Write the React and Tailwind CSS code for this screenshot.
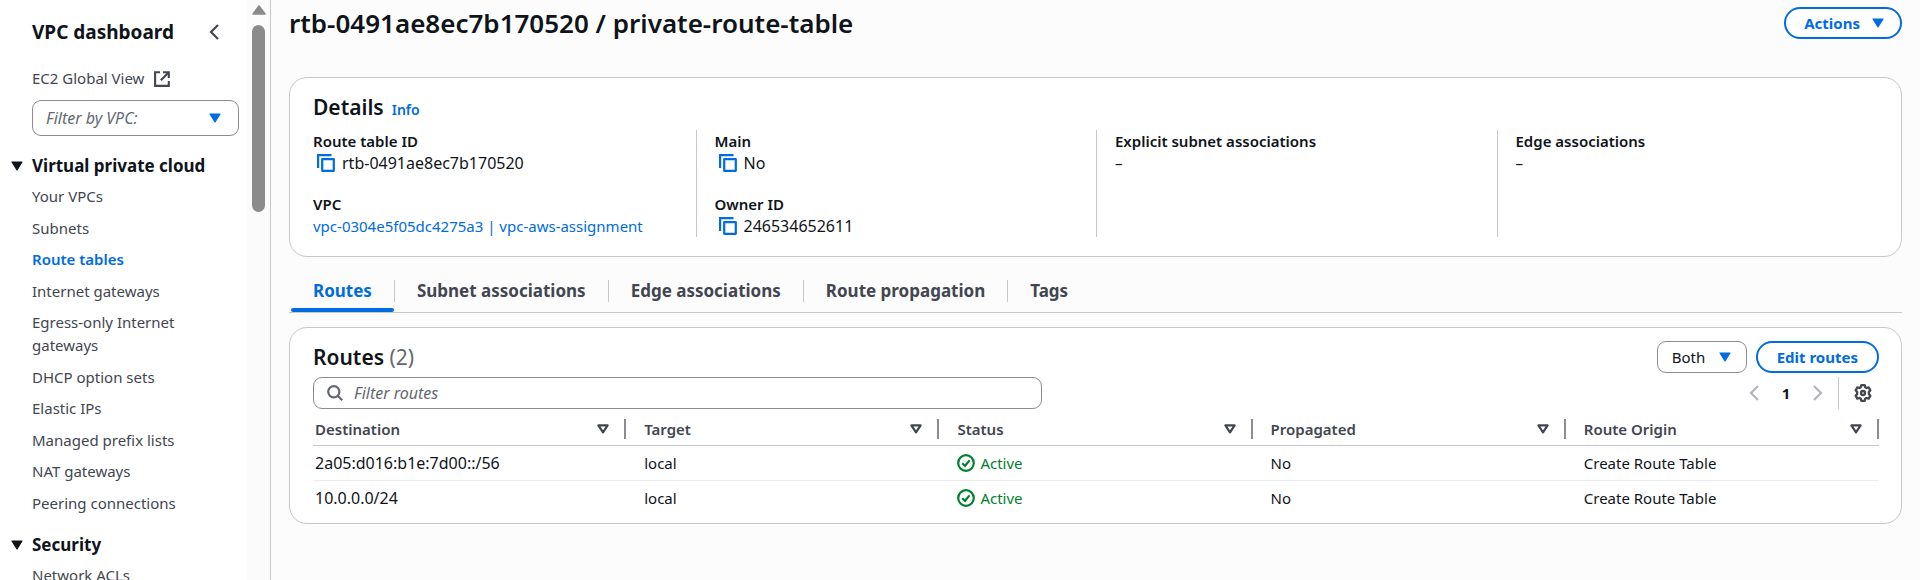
import React from "react";

const NAV = [
  "Your VPCs",
  "Subnets",
  "Route tables",
  "Internet gateways",
  "Egress-only Internet gateways",
  "DHCP option sets",
  "Elastic IPs",
  "Managed prefix lists",
  "NAT gateways",
  "Peering connections",
];

const TABS = ["Routes", "Subnet associations", "Edge associations", "Route propagation", "Tags"];

const COLUMNS = ["Destination", "Target", "Status", "Propagated", "Route Origin"];

const ROUTES = [
  { destination: "2a05:d016:b1e:7d00::/56", target: "local", status: "Active", propagated: "No", origin: "Create Route Table" },
  { destination: "10.0.0.0/24", target: "local", status: "Active", propagated: "No", origin: "Create Route Table" },
];

function Caret({ className }) {
  return (
    <svg viewBox="0 0 12 10" className={className} aria-hidden="true">
      <path d="M1 1h10L6 9z" fill="currentColor" stroke="currentColor" strokeWidth="1.2" strokeLinejoin="round" />
    </svg>
  );
}

function SortIcon() {
  return (
    <svg viewBox="0 0 12 10" className="h-[10px] w-3" fill="none" stroke="currentColor" strokeWidth="2.2" strokeLinejoin="round" aria-hidden="true">
      <path d="M1.4 1.4h9.2L6 8.4z" />
    </svg>
  );
}

function Chevron({ direction, className }) {
  return (
    <svg viewBox="0 0 10 16" className={className} fill="none" stroke="currentColor" strokeWidth="2.2" aria-hidden="true">
      <path d={direction === "left" ? "M9 1 2 8l7 7" : "M1 1l7 7-7 7"} />
    </svg>
  );
}

function ExternalIcon() {
  return (
    <svg viewBox="0 0 16 16" className="size-4" fill="none" stroke="currentColor" strokeWidth="2.1" aria-hidden="true">
      <path d="M6 1.2H1.1v13.7h13.7V10" />
      <path d="M9 1.2h5.8V7" />
      <path d="M14.6 1.4 6.8 9.2" />
    </svg>
  );
}

function CopyIcon() {
  return (
    <svg viewBox="0 0 18 18" className="size-[18px]" fill="none" stroke="currentColor" strokeWidth="2.2" aria-hidden="true">
      <path d="M1.1 14V1.1H14.5" />
      <path d="M5.2 5.2h11.6v11.6H5.2z" strokeLinejoin="round" />
    </svg>
  );
}

function CheckCircle() {
  return (
    <svg viewBox="0 0 18 18" className="size-[18px]" fill="none" stroke="currentColor" strokeWidth="2.2" aria-hidden="true">
      <circle cx="9" cy="9" r="7.8" />
      <path d="M5.2 9.2 8 11.8l4.6-5.4" />
    </svg>
  );
}

function SearchIcon() {
  return (
    <svg viewBox="0 0 16 16" className="size-4" fill="none" stroke="currentColor" strokeWidth="2.2" aria-hidden="true">
      <circle cx="6.8" cy="6.8" r="5.6" />
      <path d="m10.8 10.8 4.4 4.4" />
    </svg>
  );
}

function GearIcon() {
  return (
    <svg viewBox="0 0 18 18" className="size-[18px]" fill="none" stroke="currentColor" strokeWidth="2.3" strokeLinejoin="round" aria-hidden="true">
      <path d="M7.3 1.2h3.4l.5 2 1.3.8 2.2-.6 1.7 2.9-1.5 1.6v2.2l1.5 1.6-1.7 2.9-2.2-.6-1.3.8-.5 2H7.3l-.5-2-1.3-.8-2.2.6-1.7-2.9 1.5-1.6V7.9L1.6 6.3l1.7-2.9 2.2.6 1.3-.8z" />
      <circle cx="9" cy="9" r="2" />
    </svg>
  );
}

function Detail({ label, copy, children }) {
  return (
    <div>
      <dt className="font-semibold">{label}</dt>
      <dd className={copy ? "flex items-center text-[16px]" : "flex items-center"}>
        {copy && (
          <button type="button" aria-label={"Copy " + label} className="mr-[7px] ml-1 text-[#006ce0]">
            <CopyIcon />
          </button>
        )}
        {children}
      </dd>
    </div>
  );
}

function SectionHeading({ children }) {
  return (
    <h2 className="flex items-center gap-[9px] pl-[11px] text-[17px] leading-[23px] font-bold">
      <Caret className="h-[10px] w-3" />
      {children}
    </h2>
  );
}

function Sidebar() {
  return (
    <aside className="flex w-[271px] shrink-0 overflow-hidden border-r border-[#c6c6cd] bg-white">
      <nav className="min-w-0 flex-1" aria-label="VPC">
        <div className="flex items-center justify-between pt-[18px] pr-7 pl-8">
          <a href="#dashboard" className="text-[19px] leading-7 font-bold">VPC dashboard</a>
          <button type="button" aria-label="Close navigation" className="text-[#424650]">
            <Chevron direction="left" className="h-4 w-[10px]" />
          </button>
        </div>
        <a href="#global-view" className="mt-[21px] ml-8 flex items-center gap-[10px] leading-[23px] text-[#424650]">
          EC2 Global View
          <ExternalIcon />
        </a>
        <div className="mt-[10px] mr-2 ml-8 grid items-center">
          <select aria-label="Filter by VPC" className="col-start-1 row-start-1 h-9 w-full appearance-none rounded-[9px] border border-[#8c8c94] bg-white px-[13px] text-[16px] text-[#656871] italic">
            <option>Filter by VPC:</option>
          </select>
          <Caret className="pointer-events-none col-start-1 row-start-1 mr-[18px] h-[10px] w-3 justify-self-end text-[#006ce0]" />
        </div>
        <div className="mt-[18px]">
          <SectionHeading>Virtual private cloud</SectionHeading>
        </div>
        <ul className="mt-2 flex min-h-[330px] flex-col justify-between pr-14 pl-8 leading-[23px] text-[#424650]">
          {NAV.map((item) => (
            <li key={item}>
              <a href="#nav" className={item === "Route tables" ? "block font-semibold text-[#006ce0]" : "block"}>{item}</a>
            </li>
          ))}
        </ul>
        <div className="mt-[18px]">
          <SectionHeading>Security</SectionHeading>
        </div>
        <a href="#nav" className="mt-2 block pl-8 leading-[23px] text-[#424650]">Network ACLs</a>
      </nav>
      <div className="flex w-[23px] flex-col items-center bg-[#fbfbfb] pt-[5px]" aria-hidden="true">
        <svg viewBox="0 0 14 10" className="h-[10px] w-[14px] text-[#8b8b8b]">
          <path d="M7 1 13 9H1z" fill="currentColor" stroke="currentColor" strokeWidth="1.6" strokeLinejoin="round" />
        </svg>
        <div className="mt-[10px] h-[187px] w-[13px] rounded-full bg-[#8b8b8b]" />
      </div>
    </aside>
  );
}

function Details() {
  return (
    <section className="mt-[38px] rounded-[18px] border border-[#c6c6cd] bg-white pt-[15px] pr-[22px] pb-[19px] pl-[23px]">
      <div className="flex items-baseline gap-2">
        <h2 className="text-[21px] leading-7 font-semibold">Details</h2>
        <a href="#info" className="text-[14px] leading-5 font-semibold text-[#006ce0]">Info</a>
      </div>
      <dl className="mt-[9px] grid grid-cols-4 gap-x-9 leading-[22px]">
        <div className="flex flex-col gap-[19px]">
          <Detail label="Route table ID" copy>rtb-0491ae8ec7b170520</Detail>
          <Detail label="VPC">
            <a href="#vpc" className="text-[#006ce0]">vpc-0304e5f05dc4275a3 | vpc-aws-assignment</a>
          </Detail>
        </div>
        <div className="-ml-[18px] flex flex-col gap-[19px] border-l border-[#c6c6cd] pl-[18px]">
          <Detail label="Main" copy>No</Detail>
          <Detail label="Owner ID" copy>246534652611</Detail>
        </div>
        <div className="-ml-[18px] border-l border-[#c6c6cd] pl-[18px]">
          <Detail label="Explicit subnet associations">–</Detail>
        </div>
        <div className="-ml-[18px] border-l border-[#c6c6cd] pl-[18px]">
          <Detail label="Edge associations">–</Detail>
        </div>
      </dl>
    </section>
  );
}

function Tabs() {
  return (
    <div role="tablist" className="mt-[18px] flex border-b border-[#c6c6cd]">
      {TABS.map((tab, i) => (
        <div key={tab} className="flex items-start">
          {i > 0 && <span className="mt-[5px] h-[22px] w-px bg-[#c6c6cd]" />}
          <button
            type="button"
            role="tab"
            aria-selected={i === 0}
            className={
              i === 0
                ? "ml-[2px] flex h-[37px] flex-col justify-between pt-1 text-[17px] leading-6 font-bold text-[#006ce0]"
                : "h-[37px] px-[22px] pt-1 pb-[9px] text-[17px] leading-6 font-bold text-[#424650]"
            }
          >
            <span className={i === 0 ? "px-[22px]" : ""}>{tab}</span>
            {i === 0 && <span className="h-1 w-full rounded-sm bg-[#006ce0]" />}
          </button>
        </div>
      ))}
    </div>
  );
}

function RoutesPanel() {
  return (
    <section className="mt-[14px] rounded-[18px] border border-[#c6c6cd] bg-white pt-[13px] pr-[22px] pb-2 pl-[23px]">
      <div className="flex items-center justify-between">
        <h2 className="text-[21px] leading-8 font-semibold">
          Routes <span className="font-normal text-[#656871]">(2)</span>
        </h2>
        <div className="flex gap-[9px]">
          <div className="grid items-center">
            <select aria-label="Route type" className="col-start-1 row-start-1 h-8 w-[90px] appearance-none rounded-[9px] border border-[#8c8c94] bg-white px-[14px]">
              <option>Both</option>
            </select>
            <Caret className="pointer-events-none col-start-1 row-start-1 mr-4 h-[10px] w-3 justify-self-end text-[#006ce0]" />
          </div>
          <button type="button" className="h-8 rounded-full border-2 border-[#006ce0] bg-white px-[19px] font-bold text-[#006ce0]">
            Edit routes
          </button>
        </div>
      </div>
      <div className="mt-1 flex items-center justify-between">
        <label className="flex h-8 w-[729px] items-center gap-[11px] rounded-[9px] border border-[#8c8c94] px-[13px] text-[16px] text-[#656871]">
          <SearchIcon />
          <input type="text" aria-label="Filter routes" placeholder="Filter routes" className="min-w-0 flex-1 outline-none placeholder:text-[#656871] placeholder:italic" />
        </label>
        <div className="flex items-center pr-[7px]">
          <button type="button" aria-label="Previous page" className="text-[#b4b4bb]">
            <Chevron direction="left" className="h-4 w-[10px]" />
          </button>
          <button type="button" className="w-[54px] text-center font-bold">1</button>
          <button type="button" aria-label="Next page" className="text-[#b4b4bb]">
            <Chevron direction="right" className="h-4 w-[10px]" />
          </button>
          <span className="mx-[15px] h-8 w-px bg-[#c6c6cd]" />
          <button type="button" aria-label="Preferences" className="text-[#424650]">
            <GearIcon />
          </button>
        </div>
      </div>
      <table className="w-full table-fixed border-collapse">
        <thead>
          <tr className="border-b border-[#c6c6cd] text-left text-[#424650]">
            {COLUMNS.map((c, i) => (
              <th key={c} scope="col" className={i === 0 ? "h-9 py-0 pl-[2px] font-semibold" : "h-9 py-0 pl-[18px] font-semibold"}>
                <div className="mt-1 flex h-5 items-center border-r-2 border-[#8c8c94] pr-[15px]">
                  <span className="flex-1">{c}</span>
                  <button type="button" aria-label={"Sort by " + c}>
                    <SortIcon />
                  </button>
                </div>
              </th>
            ))}
          </tr>
        </thead>
        <tbody>
          {ROUTES.map((r) => (
            <tr key={r.destination} className="h-[35px] border-b border-[#ebebf0] last:border-0">
              <td className="pl-[2px] text-[16px]">{r.destination}</td>
              <td className="pl-[18px]">{r.target}</td>
              <td className="pl-[18px]">
                <span className="flex items-center gap-[5px] text-[#00802f]">
                  <CheckCircle />
                  {r.status}
                </span>
              </td>
              <td className="pl-[18px]">{r.propagated}</td>
              <td className="pl-[18px]">{r.origin}</td>
            </tr>
          ))}
        </tbody>
      </table>
    </section>
  );
}

export default function App() {
  return (
    <div className="flex h-screen overflow-hidden bg-[#fcfcfc] font-['Noto_Sans',sans-serif] text-[15px] leading-[22px] text-[#0f141a]">
      <Sidebar />
      <main className="min-w-0 flex-1 pr-[18px] pl-[18px]">
        <div className="flex items-center justify-between pt-[7px]">
          <h1 className="text-[26px] leading-8 font-semibold">rtb-0491ae8ec7b170520 / private-route-table</h1>
          <button type="button" className="flex h-8 items-center gap-3 rounded-full border-2 border-[#006ce0] bg-white px-[18px] pr-4 font-bold text-[#006ce0]">
            Actions
            <Caret className="h-[10px] w-3" />
          </button>
        </div>
        <Details />
        <Tabs />
        <RoutesPanel />
      </main>
    </div>
  );
}
